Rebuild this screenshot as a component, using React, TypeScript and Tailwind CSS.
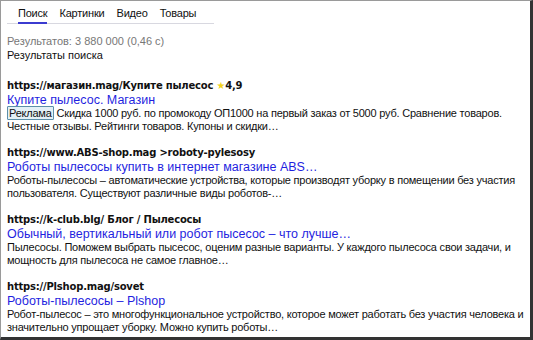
import React from 'react';

type Result = {
  url: React.ReactNode;
  title: string;
  lines: React.ReactNode[];
};

const results: Result[] = [
  {
    url: (
      <>
        https://магазин.mag/Купите пылесос <span className="text-[#f2d21b]">★</span>4,9
      </>
    ),
    title: 'Купите пылесос. Магазин',
    lines: [
      <>
        <span className="border border-[#5b8fa8] rounded-[1px] bg-[#e3f0f6] px-[1px] mr-[3px]">Реклама</span>
        Скидка 1000 руб. по промокоду ОП1000 на первый заказ от 5000 руб. Сравнение товаров.
      </>,
      'Честные отзывы. Рейтинги товаров. Купоны и скидки…',
    ],
  },
  {
    url: 'https://www.ABS-shop.mag >roboty-pylesosy',
    title: 'Роботы пылесосы купить в интернет магазине ABS…',
    lines: [
      'Роботы-пылесосы – автоматические устройства, которые производят уборку в помещении без участия',
      'пользователя. Существуют различные виды роботов-…',
    ],
  },
  {
    url: 'https://k-club.blg/ Блог / Пылесосы',
    title: 'Обычный, вертикальный или робот пысесос – что лучше…',
    lines: [
      'Пылесосы. Поможем выбрать пысесос, оценим разные варианты. У каждого пылесоса свои задачи, и',
      'мощность для пылесоса не самое главное…',
    ],
  },
  {
    url: 'https://Plshop.mag/sovet',
    title: 'Роботы-пылесосы – Plshop',
    lines: [
      'Робот-пылесос – это многофункциональное устройство, которое может работать без участия человека и',
      'значительно упрощает уборку. Можно купить роботы…',
    ],
  },
];

const tabs = ['Поиск', 'Картинки', 'Видео', 'Товары'];

export default function App() {
  return (
    <div className="w-[533px] h-[340px] bg-white border-l border-t border-[#9a9a9a] border-r-[3px] border-b-[3px] border-r-[#333] border-b-[#333] overflow-hidden font-['Liberation_Sans',sans-serif] text-[#111]">
      <div className="pl-[6px] pt-[5px]">
        <div className="flex w-[207px] border-b border-[#d8d8e0] pl-[11px] gap-[12px] text-[11px] tracking-[-0.2px]">
          {tabs.map((t, i) => (
            <div
              key={t}
              className={i === 0 ? 'pb-[1px] border-b-2 border-[#3b3bd0] -mb-[1px] leading-[15px]' : 'pb-[1px] leading-[15px]'}
            >
              {t}
            </div>
          ))}
        </div>

        <div className="mt-[10px] text-[11px] leading-[14px]">
          <div className="text-[#777]">Результатов: 3 880 000 (0,46 с)</div>
          <div>Результаты поиска</div>
        </div>

        <div className="mt-[17px] flex flex-col gap-[13px]">
          {results.map((r, i) => (
            <div key={i}>
              <div className="font-bold text-[10px] tracking-[-0.2px] leading-[14px] font-['DejaVu_Sans',sans-serif]">{r.url}</div>
              <div className="text-[#1f1fe0] text-[12.5px] leading-[14px]">{r.title}</div>
              <div className="text-[11px] leading-[13px] tracking-[-0.22px] whitespace-nowrap">
                {r.lines.map((l, j) => (
                  <div key={j}>{l}</div>
                ))}
              </div>
            </div>
          ))}
        </div>
      </div>
    </div>
  );
}
